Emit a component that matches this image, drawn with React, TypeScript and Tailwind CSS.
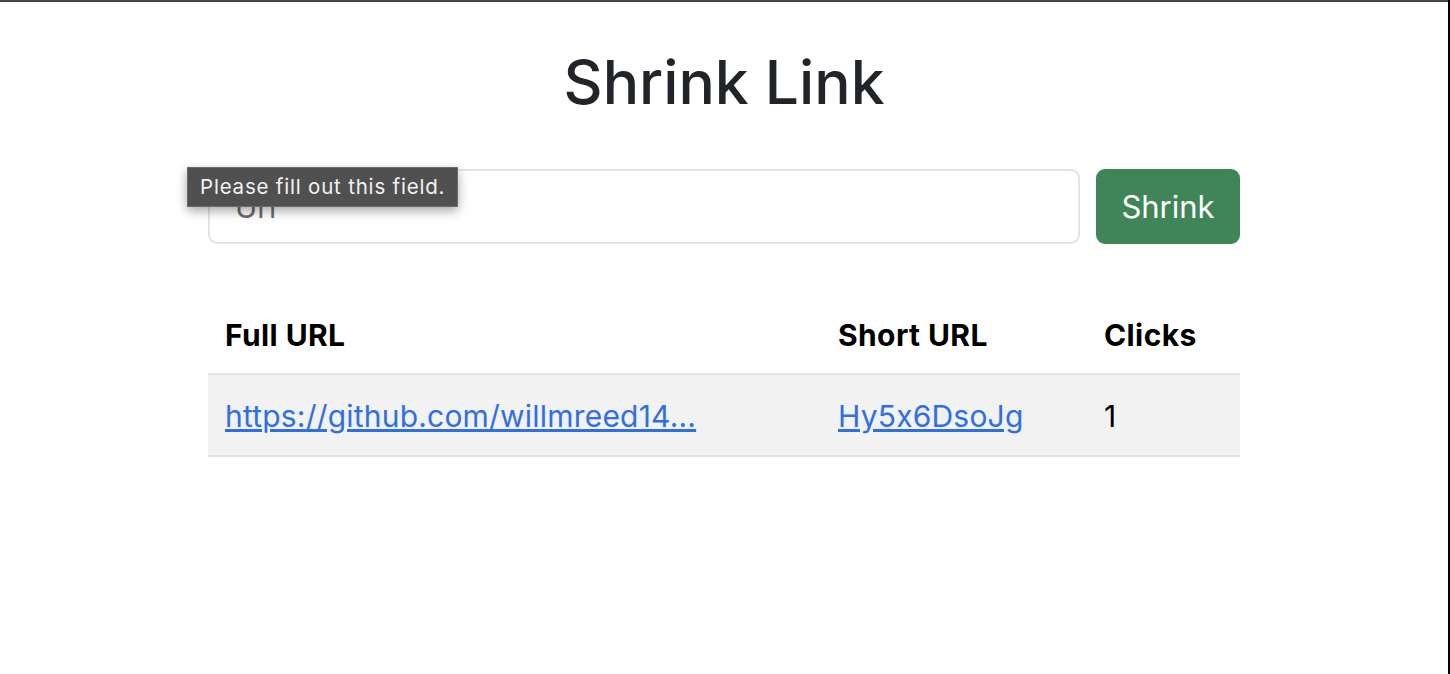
import React from "react";

export default function App() {
  return (
    <div className="flex h-[674px] w-[1450px] overflow-hidden bg-white" style={{ fontFamily: "Inter, 'Noto Sans', sans-serif", fontFeatureSettings: "'calt' 0" }}>
      <div className="relative flex h-full w-[1448px] flex-col border-t-2 border-[#454545]">
        <div className="mx-auto flex w-[1032px] flex-col">
          <h1 className="mt-[40px] text-center text-[60.5px] font-medium leading-[80px] text-[#212529]">Shrink Link</h1>
          <div className="relative mt-[47px] flex gap-4">
            <input
              placeholder="Url"
              className="h-[75px] flex-1 rounded-[9px] border-2 border-[#e2e4e7] px-[25px] text-[30px] text-[#212529] outline-none placeholder:text-[#6c6c6c]"
            />
            <button className="h-[75px] w-[144px] rounded-[9px] bg-[#3f8558] pt-[2px] text-[31px] text-white">Shrink</button>
            <div className="absolute left-[-21px] top-[-2px] flex h-[40px] items-center border border-[#6b6b6b] bg-[#505050] px-3 text-[20.5px] tracking-[0.8px] text-[#f2f2f2] shadow-[0_4px_10px_rgba(0,0,0,0.35)]">
              Please fill out this field.
            </div>
          </div>
          <table className="mt-[56px] w-full border-collapse text-[30px]">
            <thead>
              <tr className="border-b-2 border-[#dee2e6]">
                <th className="w-[613px] px-[17px] pb-[15px] pt-[13px] text-left font-bold tracking-[0.4px] text-black">Full URL</th>
                <th className="w-[266px] px-[17px] pb-[15px] pt-[13px] text-left font-bold tracking-[0.4px] text-black">Short URL</th>
                <th className="px-[17px] pb-[15px] pt-[13px] text-left font-bold tracking-[0.4px] text-black">Clicks</th>
              </tr>
            </thead>
            <tbody>
              <tr className="border-b-2 border-[#dee2e6] bg-[#f2f2f2]">
                <td className="h-[82px] px-[17px] pt-[2px]">
                  <a href="#" className="tracking-[0.2px] text-[#2f6fe6] underline">https://github.com/willmreed14...</a>
                </td>
                <td className="h-[82px] px-[17px] pt-[2px]">
                  <a href="#" className="tracking-[0.2px] text-[#2f6fe6] underline">Hy5x6DsoJg</a>
                </td>
                <td className="h-[82px] px-[17px] pt-[2px] text-black">1</td>
              </tr>
            </tbody>
          </table>
        </div>
      </div>
      <div className="h-full w-[2px] bg-black"></div>
    </div>
  );
}
